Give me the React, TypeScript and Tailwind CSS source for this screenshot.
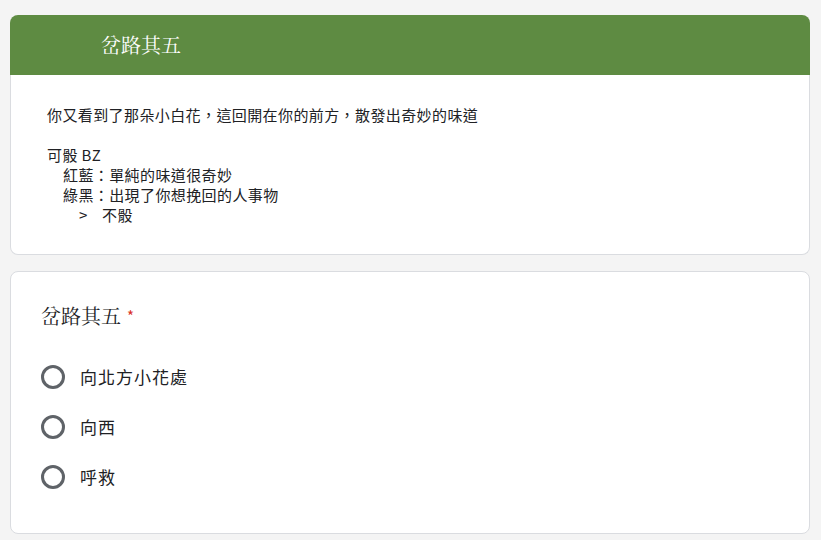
const OPTIONS = ["向北方小花處", "向西", "呼救"];

const SANS = "font-['Noto_Sans_CJK_TC','Noto_Sans',sans-serif]";
const SERIF = "font-['Noto_Serif_CJK_TC','Liberation_Serif','Noto_Sans_CJK_TC',serif]";

function Radio({ label }: { label: string }) {
  return (
    <label className="flex h-[50px] items-center gap-[15px]">
      <span className="h-[24px] w-[24px] rounded-full border-[3px] border-[#5f6368]" />
      <span className={`text-[17px] tracking-[1px] text-[#202124] ${SANS}`}>{label}</span>
    </label>
  );
}

export default function App() {
  return (
    <div className="min-h-[540px] bg-[#f4f4f4] px-[10px] pt-[15px]">
      <div className="w-[800px]">
        <div className="flex h-[60px] items-center rounded-t-[8px] bg-[#5e8b42] pl-[91px]">
          <h1 className={`text-[20px] text-white ${SERIF}`}>岔路其五</h1>
        </div>
        <div
          className={`rounded-b-[8px] border-x border-b border-[#dadce0] bg-white px-[36px] pb-[29px] pt-[30px] text-[15px] leading-[20px] tracking-[0.4px] text-[#202124] ${SANS}`}
        >
          <p>你又看到了那朵小白花，這回開在你的前方，散發出奇妙的味道</p>
          <p className="h-[20px]" />
          <p>可骰 BZ</p>
          <p className="pl-[16px]">紅藍：單純的味道很奇妙</p>
          <p className="pl-[16px]">綠黑：出現了你想挽回的人事物</p>
          <p className="flex pl-[32px]">
            <span className="w-[23px]">&gt;</span>
            <span>不骰</span>
          </p>
        </div>
      </div>

      <div className="mt-[16px] w-[800px] rounded-[8px] border border-[#dadce0] bg-white px-[30px] pb-[31px] pt-[30px]">
        <h2 className={`flex items-center text-[20px] leading-[28px] text-[#202124] ${SERIF}`}>
          岔路其五
          <span className={`ml-[6px] text-[15px] text-[#d93025] ${SANS}`}>*</span>
        </h2>
        <div className="mt-[22px] flex flex-col">
          {OPTIONS.map((opt) => (
            <Radio key={opt} label={opt} />
          ))}
        </div>
      </div>
    </div>
  );
}
